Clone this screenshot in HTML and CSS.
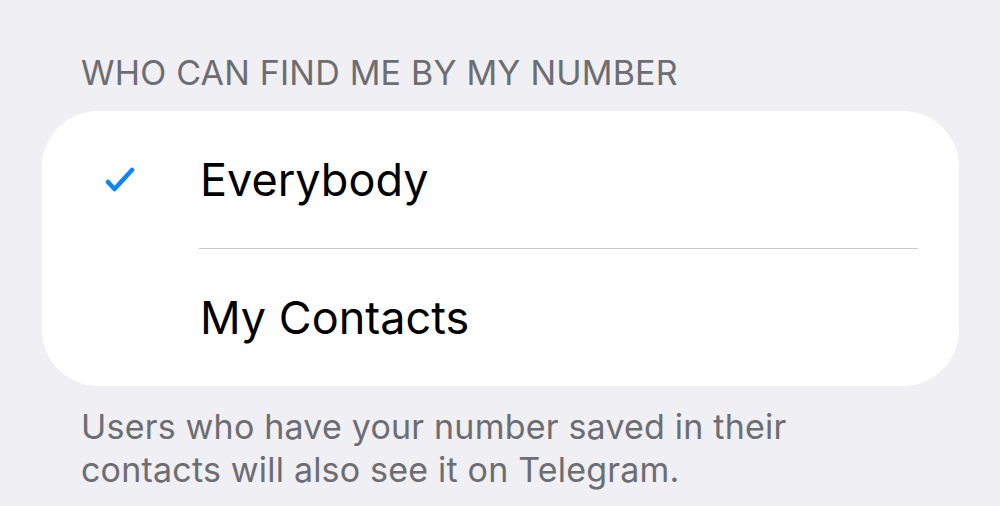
FILE: index.html
```html
<!DOCTYPE html>
<html lang="en">
<head>
<meta charset="utf-8">
<title>Who can find me by my number</title>
<link rel="stylesheet" href="styles.css">
</head>
<body>
<main class="page">
  <h2 class="section-header">WHO CAN FIND ME BY MY NUMBER</h2>
  <section class="card">
    <div class="row">
      <span class="check-cell">
        <svg class="check" viewBox="0 0 30 26" width="30" height="26" aria-hidden="true">
          <path d="M3 15 L9.5 22 L27 3" fill="none" stroke="#0a84ff" stroke-width="4.5" stroke-linecap="round" stroke-linejoin="round"/>
        </svg>
      </span>
      <span class="label">Everybody</span>
    </div>
    <div class="separator"></div>
    <div class="row">
      <span class="check-cell"></span>
      <span class="label">My Contacts</span>
    </div>
  </section>
  <p class="section-footer">Users who have your number saved in their<br>contacts will also see it on Telegram.</p>
</main>
</body>
</html>
```

FILE: styles.css
```css
html, body {
  margin: 0;
  padding: 0;
  background: #efeff4;
  width: 1000px;
  height: 506px;
  overflow: hidden;
}

.page {
  padding: 0 41px 0 42px;
  font-family: Inter, "Noto Sans", sans-serif;
}

.section-header {
  margin: 0;
  padding: 52px 0 0 39px;
  font-size: 34px;
  font-weight: 400;
  line-height: 42px;
  color: #6d6d72;
  letter-spacing: 0.2px;
}

.card {
  margin-top: 17px;
  background: #ffffff;
  border-radius: 56px;
  overflow: hidden;
}

.row {
  display: flex;
  align-items: center;
  height: 137px;
}

.check-cell {
  width: 158px;
  flex: none;
  display: flex;
  align-items: center;
  padding-left: 63px;
  box-sizing: border-box;
}

.check {
  display: block;
}

.label {
  font-size: 45px;
  color: #000000;
}

.separator {
  height: 1px;
  margin: 0 41px 0 157px;
  background: #c8c7cc;
}

.section-footer {
  margin: 0;
  padding: 19px 0 0 39px;
  font-size: 34px;
  line-height: 43px;
  color: #6d6d72;
  letter-spacing: 0.2px;
}
```
